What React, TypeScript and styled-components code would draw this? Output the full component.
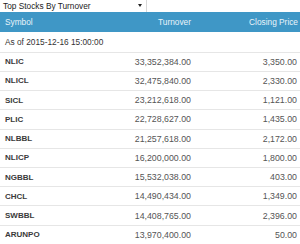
import React from 'react';
import styled, { createGlobalStyle } from 'styled-components';

const GlobalStyle = createGlobalStyle`
  html, body {
    margin: 0;
    padding: 0;
    background: #ffffff;
  }
  body {
    font-family: "Liberation Sans", Arial, sans-serif;
  }
`;

const Widget = styled.div`
  width: 300px;
  height: 244px;
  overflow: hidden;
  display: flex;
  flex-direction: column;
`;

const Picker = styled.div`
  width: 147px;
  height: 12px;
  box-sizing: border-box;
  border-right: 1px solid #d8d8d8;
  display: flex;
  align-items: center;
  justify-content: space-between;
  padding: 0 4px 0 3px;
  font-size: 8.3px;
  color: #222;
`;

const Caret = styled.span`
  width: 0;
  height: 0;
  border-top: 3px solid #222;
  border-left: 2.5px solid transparent;
  border-right: 2.5px solid transparent;
`;

const Grid = styled.div<{ $head?: boolean }>`
  display: grid;
  grid-template-columns: 120px 71px 1fr;
  align-items: center;
  box-sizing: border-box;
  height: ${({ $head }) => ($head ? '20px' : '19.4px')};
  background: ${({ $head }) => ($head ? '#3f97c6' : 'transparent')};
  color: ${({ $head }) => ($head ? '#eaf4fa' : '#555')};
  border-top: ${({ $head }) => ($head ? 'none' : '1px solid #e6e6e6')};
  font-size: ${({ $head }) => ($head ? '8.3px' : '8.8px')};
  padding-right: ${({ $head }) => ($head ? '2px' : '3px')};
`;

const Cell = styled.div<{ $align?: 'left' | 'right' }>`
  text-align: ${({ $align }) => $align || 'left'};
  white-space: nowrap;
`;

const Symbol = styled(Cell)`
  padding-left: 5px;
  font-weight: bold;
  font-size: 8px;
  color: #3a3a3a;
`;

const HeadSymbol = styled(Cell)`
  padding-left: 5px;
`;

const Stamp = styled.div`
  height: 20px;
  display: flex;
  align-items: center;
  padding-left: 5px;
  font-size: 8.3px;
  color: #333;
`;

const rows = [
  ['NLIC', '33,352,384.00', '3,350.00'],
  ['NLICL', '32,475,840.00', '2,330.00'],
  ['SICL', '23,212,618.00', '1,121.00'],
  ['PLIC', '22,728,627.00', '1,435.00'],
  ['NLBBL', '21,257,618.00', '2,172.00'],
  ['NLICP', '16,200,000.00', '1,800.00'],
  ['NGBBL', '15,532,038.00', '403.00'],
  ['CHCL', '14,490,434.00', '1,349.00'],
  ['SWBBL', '14,408,765.00', '2,396.00'],
  ['ARUNPO', '13,970,400.00', '50.00'],
];

export default function App() {
  return (
    <Widget>
      <GlobalStyle />
      <Picker>
        Top Stocks By Turnover
        <Caret />
      </Picker>
      <Grid $head>
        <HeadSymbol>Symbol</HeadSymbol>
        <Cell $align='right'>Turnover</Cell>
        <Cell $align='right'>Closing Price</Cell>
      </Grid>
      <Stamp>As of 2015-12-16 15:00:00</Stamp>
      {rows.map(([sym, turnover, price]) => (
        <Grid key={sym}>
          <Symbol>{sym}</Symbol>
          <Cell $align='right'>{turnover}</Cell>
          <Cell $align='right'>{price}</Cell>
        </Grid>
      ))}
    </Widget>
  );
}
